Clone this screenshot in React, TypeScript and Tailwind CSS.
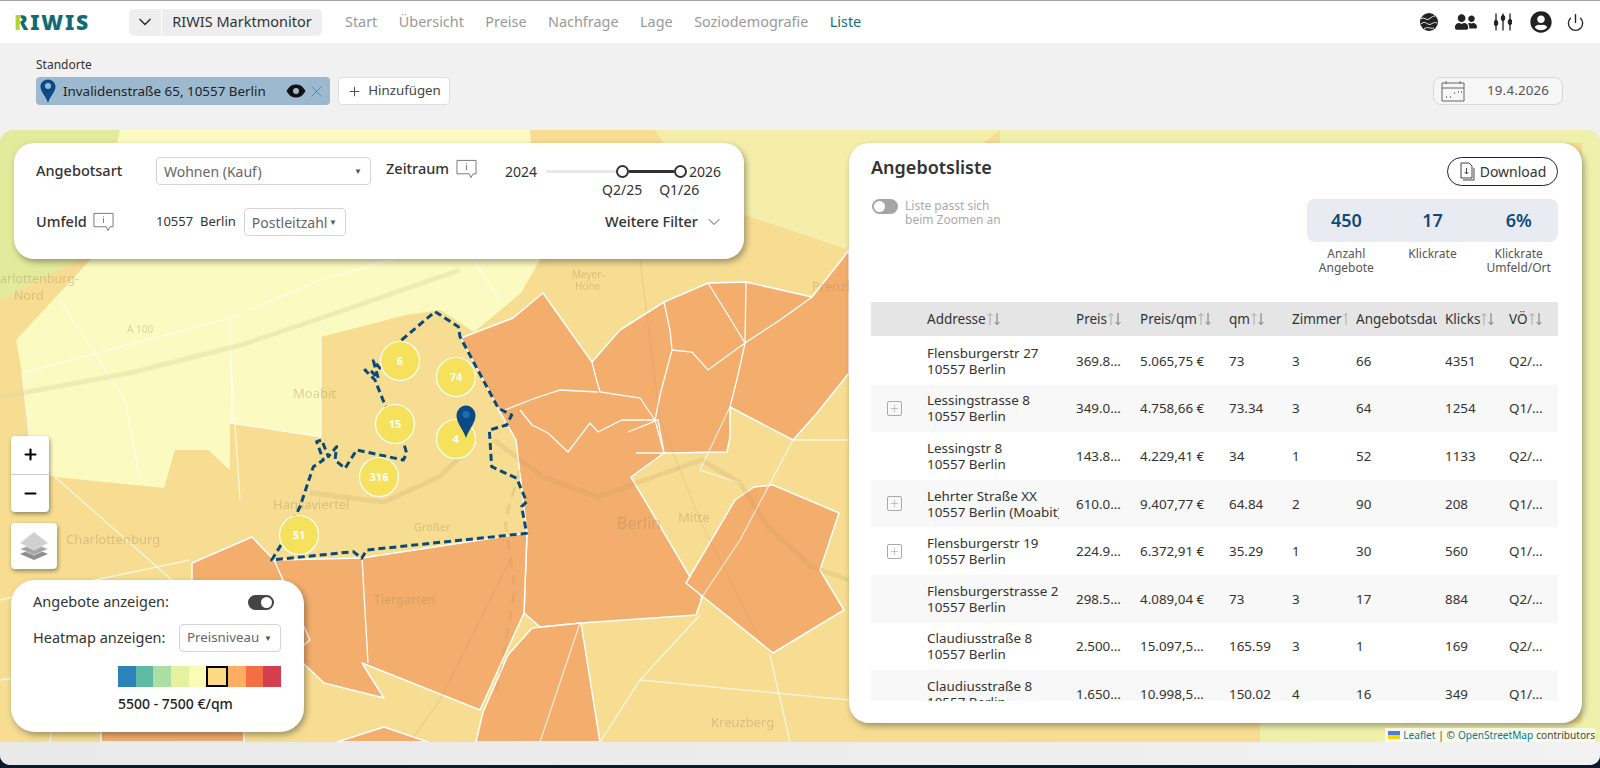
import { ChevronDown, Plus, X, Minus, Power } from "lucide-react";
import { FaUserCircle, FaUserFriends } from "react-icons/fa";

const nav = ["Start", "Übersicht", "Preise", "Nachfrage", "Lage", "Soziodemografie"];

const rows = [
  { a: "Flensburgerstr 27", b: "10557 Berlin", preis: "369.8…", qmPreis: "5.065,75 €", qm: "73", zi: "3", dauer: "66", klicks: "4351", vo: "Q2/…", plus: false },
  { a: "Lessingstrasse 8", b: "10557 Berlin", preis: "349.0…", qmPreis: "4.758,66 €", qm: "73.34", zi: "3", dauer: "64", klicks: "1254", vo: "Q1/…", plus: true },
  { a: "Lessingstr 8", b: "10557 Berlin", preis: "143.8…", qmPreis: "4.229,41 €", qm: "34", zi: "1", dauer: "52", klicks: "1133", vo: "Q2/…", plus: false },
  { a: "Lehrter Straße XX", b: "10557 Berlin (Moabit)", preis: "610.0…", qmPreis: "9.407,77 €", qm: "64.84", zi: "2", dauer: "90", klicks: "208", vo: "Q1/…", plus: true },
  { a: "Flensburgerstr 19", b: "10557 Berlin", preis: "224.9…", qmPreis: "6.372,91 €", qm: "35.29", zi: "1", dauer: "30", klicks: "560", vo: "Q1/…", plus: true },
  { a: "Flensburgerstrasse 2", b: "10557 Berlin", preis: "298.5…", qmPreis: "4.089,04 €", qm: "73", zi: "3", dauer: "17", klicks: "884", vo: "Q2/…", plus: false },
  { a: "Claudiusstraße 8", b: "10557 Berlin", preis: "2.500…", qmPreis: "15.097,5…", qm: "165.59", zi: "3", dauer: "1", klicks: "169", vo: "Q2/…", plus: false },
  { a: "Claudiusstraße 8", b: "10557 Berlin", preis: "1.650…", qmPreis: "10.998,5…", qm: "150.02", zi: "4", dauer: "16", klicks: "349", vo: "Q1/…", plus: false },
];

const cols = "grid grid-cols-[56px_149px_64px_89px_63px_64px_89px_64px_49px]";

const legend = ["bg-[#2b83ba]", "bg-[#5fbaa3]", "bg-[#abdda4]", "bg-[#e3f1a0]", "bg-[#fbfbb8]", "bg-[#fdd981]", "bg-[#fdae61]", "bg-[#f46d43]", "bg-[#d53e4f]"];

const orange = [
  "461,338 513,318 543,293 592,362 620,330 664,302 708,283 746,282 812,297 839,263 849,250 849,373 817,413 793,440 730,407 730,437 727,452 664,453 631,477 686,570 702,598 696,615 581,623 540,627 524,613 527,533 516,440 500,412",
  "362,558 527,533 524,613 480,710 362,663 384,698 324,683 300,660 300,640 274,560",
  "483,712 508,655 532,628 581,623 600,742 476,742",
  "754,487 773,485 839,513 820,570 844,610 773,653 686,583 735,500",
  "192,563 252,537 274,560 310,640 250,690 192,650",
  "101,720 244,720 244,742 101,742",
  "337,742 384,727 428,742",
];

const innerLines = [
  "592,362 596,378 600,392 640,398 655,420 664,453",
  "664,302 670,330 672,350 660,395 655,420",
  "708,283 728,315 745,343 738,375 730,407",
  "672,350 692,352 708,370 745,343 746,282",
  "520,410 532,425 548,433 568,452 590,423 598,432 622,420 655,420",
  "628,432 658,420 664,453 636,453",
  "362,558 368,663",
  "745,343 780,320 812,297",
  "500,412 530,400 560,390 598,392",
];

const lightLines = [
  "22,373 230,318 321,280 460,240",
  "230,350 240,500",
  "125,400 140,480",
  "321,337 321,437",
  "230,318 232,423",
  "230,423 321,437",
  "460,240 500,300",
  "60,300 125,400",
  "22,373 33,470",
  "55,477 240,640 300,690",
  "0,600 190,560",
  "0,680 60,670 50,742",
  "580,623 540,742",
  "600,742 640,680 700,615",
  "640,680 849,700",
  "770,655 790,742",
  "850,440 793,440 740,540 700,600",
  "730,407 700,470 740,483",
];

const boundary = [[455,150],[555,65],[625,110],[630,140],[745,355],[785,375],[770,405],[718,420],[725,530],[800,565],[830,635],[815,650],[830,730],[350,780],[335,805],[310,785],[65,810],[90,770],[150,650],[190,530],[220,510],[200,455],[215,450],[235,500],[260,470],[255,510],[285,535],[320,480],[460,510],[470,490],[460,455],[405,345],[375,270],[345,240],[365,245],[385,265],[370,212],[395,240],[455,150]]
  .map(([x, y]) => `${250 + x / 3},${290 + y / 3}`)
  .join(" ");

const clusters = [
  { x: 400, y: 361, n: "6" },
  { x: 456, y: 377, n: "74" },
  { x: 395, y: 424, n: "15" },
  { x: 456, y: 439, n: "4" },
  { x: 379, y: 477, n: "316" },
  { x: 299, y: 535, n: "51" },
];

const labels = [
  { x: 0, y: 283, t: "arlottenburg-", s: 12.5 },
  { x: 14, y: 300, t: "Nord", s: 12.5 },
  { x: 293, y: 398, t: "Moabit", s: 13 },
  { x: 273, y: 509, t: "Hansaviertel", s: 13 },
  { x: 66, y: 544, t: "Charlottenburg", s: 13 },
  { x: 374, y: 604, t: "Tiergarten", s: 12.5 },
  { x: 617, y: 529, t: "Berlin", s: 16 },
  { x: 678, y: 522, t: "Mitte", s: 13 },
  { x: 711, y: 727, t: "Kreuzberg", s: 13 },
  { x: 414, y: 531, t: "Großer", s: 11 },
  { x: 812, y: 291, t: "Prenzl", s: 13 },
  { x: 127, y: 333, t: "A 100", s: 10 },
  { x: 572, y: 278, t: "Meyer-", s: 10 },
  { x: 575, y: 290, t: "Höhe", s: 10 },
];

function MapBackdrop() {
  return (
    <svg className="absolute inset-0 h-full w-full" viewBox="0 130 1600 612" preserveAspectRatio="none">
      <rect x="0" y="130" width="1600" height="612" fill="#f6dd92" />
      <polygon points="0,130 120,130 80,260 0,300" fill="#e2ea9c" />
      <polygon points="120,130 530,130 540,260 521,293 474,332 440,310 406,315 321,337 321,437 230,423 230,470 208,450 175,450 164,488 55,477 33,470 22,373 16,340 90,260" fill="#fbfac0" />
      <polygon points="655,130 1000,130 849,250 700,200" fill="#f4eeaa" />
      <polygon points="1000,130 1600,130 1600,742 1260,742 1260,723 1582,723 1582,143 1000,143" fill="#eef0ac" />
      {orange.map((p, i) => (
        <polygon key={i} points={p} fill="#f3ae6e" stroke="#fff" strokeWidth="1.5" strokeLinejoin="round" />
      ))}
      {lightLines.map((p, i) => (
        <polyline key={i} points={p} fill="none" stroke="#fff" strokeWidth="1.3" opacity="0.7" />
      ))}
      {innerLines.map((p, i) => (
        <polyline key={i} points={p} fill="none" stroke="#fff" strokeWidth="1.3" />
      ))}
      <polyline points="0,397 130,373 241,345 330,315 460,270" fill="none" stroke="#d9d9a0" strokeWidth="5" opacity="0.4" />
      <polyline points="310,493 384,502 439,477 470,448" fill="none" stroke="#b99a58" strokeWidth="5" opacity="0.18" />
      <polyline points="494,440 543,477 598,497 636,483 702,460 740,483 768,527 812,567 849,580" fill="none" stroke="#b98a58" strokeWidth="5" opacity="0.16" />
      <polyline points="510,560 470,640 440,700 410,742" fill="none" stroke="#b9804e" strokeWidth="1" opacity="0.25" />
      <polyline points="640,260 660,420 700,520 760,640" fill="none" stroke="#b9804e" strokeWidth="1" opacity="0.18" />
      <polyline points="520,470 505,520 515,590 495,700" fill="none" stroke="#c08858" strokeWidth="3" strokeDasharray="10 8" opacity="0.2" />
      {labels.map((l) => (
        <text key={l.t} x={l.x} y={l.y} fontSize={l.s} fill="#9b8350" opacity="0.32" fontFamily="'Noto Sans', sans-serif">
          {l.t}
        </text>
      ))}
      <polyline points={boundary} fill="none" stroke="#0b4a78" strokeWidth="3" strokeDasharray="7 4" strokeLinejoin="round" />
      {clusters.map((c) => (
        <g key={c.n}>
          <circle cx={c.x} cy={c.y} r="19.5" fill="#f6e15c" stroke="#fff" strokeWidth="1.2" />
          <text x={c.x} y={c.y + 4} textAnchor="middle" fontSize="11" fontWeight="700" fill="#fff" fontFamily="'Noto Sans', sans-serif">
            {c.n}
          </text>
        </g>
      ))}
      <path d="M466 438 C463 429 456.5 423 456.5 415.5 C456.5 410 461 405.5 466 405.5 C471 405.5 475.5 410 475.5 415.5 C475.5 423 469 429 466 438 Z" fill="#0a4a86" />
      <circle cx="466" cy="414.5" r="3.6" fill="#1d6fb0" />
    </svg>
  );
}

function InfoBubble() {
  return (
    <svg width="21" height="20" viewBox="0 0 22 20" fill="none" stroke="#777" strokeWidth="1">
      <path d="M1 1 H21 V15 H18 L15.5 19 L14 15 H1 Z" strokeLinejoin="round" />
      <path d="M11 6 V11 M11 3.8 V4.6" />
    </svg>
  );
}

function SelectBox({ label, className }: { label: string; className: string }) {
  return (
    <div className={`flex h-[28px] items-center justify-between rounded-[4px] border border-[#d4d4d4] bg-white pl-[7px] pr-[8px] text-[14px] text-[#666] ${className}`}>
      <span>{label}</span>
      <span className="mb-[1px] text-[8px] text-[#555]">▼</span>
    </div>
  );
}

function Toggle({ on }: { on: boolean }) {
  return (
    <div className={`flex h-[15px] w-[26px] rounded-full border-2 ${on ? "justify-end border-[#444] bg-[#444]" : "justify-start border-[#a5a5a5] bg-[#a5a5a5]"}`}>
      <div className="h-[11px] w-[11px] rounded-full bg-white" />
    </div>
  );
}

function SortHead({ label, className = "" }: { label: string; className?: string }) {
  return (
    <div className={`flex items-center overflow-hidden whitespace-nowrap ${className}`}>
      <span className="shrink-0">{label}</span>
      <svg className="shrink-0" width="15" height="14" viewBox="0 0 15 14" fill="none" strokeWidth="1">
        <path d="M4 13 V1.5 M1.5 4 L4 1.5 L6.5 4" stroke="#aaa" />
        <path d="M11 1 V12.5 M8.5 10 L11 12.5 L13.5 10" stroke="#777" />
      </svg>
    </div>
  );
}

function GlobeIcon() {
  return (
    <svg width="18" height="18" viewBox="0 0 18 18">
      <circle cx="9" cy="9" r="9" fill="#222" />
      <path d="M1 6 C4 3 6 8 9 6 C12 4 13 3 15 3 M1 11 C4 8 6 10 8 11 C11 13 13 8 17 10 M4 16 C7 13 10 16 14 15" fill="none" stroke="#fff" strokeWidth="0.9" />
    </svg>
  );
}

function SlidersIcon() {
  return (
    <svg width="18" height="18" viewBox="0 0 18 18" fill="#222" stroke="#222">
      <path d="M2 0.5 V17.5 M9 0.5 V17.5 M16 0.5 V17.5" strokeWidth="1.3" />
      <ellipse cx="2" cy="10" rx="1.8" ry="2.8" />
      <ellipse cx="9" cy="5" rx="1.8" ry="2.8" />
      <ellipse cx="16" cy="9" rx="1.8" ry="2.8" />
    </svg>
  );
}

function LayersIcon() {
  return (
    <svg width="30" height="30" viewBox="0 0 30 30">
      <path d="M15 17 L29 23 L15 29 L1 23 Z" fill="#8f8f8f" />
      <path d="M15 12 L29 18 L15 24 L1 18 Z" fill="#a6a6a6" stroke="#f2f2f2" strokeWidth="0.6" />
      <path d="M15 1 L29 12 L15 19 L1 12 Z" fill="#cfcfcf" stroke="#f2f2f2" strokeWidth="0.6" />
    </svg>
  );
}

export default function App() {
  return (
    <div className="h-[768px] w-full overflow-hidden bg-[#0b1a2e] font-['Noto_Sans',sans-serif]">
      <div className="h-[765px] overflow-hidden rounded-b-[10px] bg-[#f1f1f1]">
        <header className="flex h-[43px] items-center border-t border-[#a3a3a3] bg-white pr-[15px]">
          <div className="ml-[14px] w-[115px] text-[21px] font-black leading-none tracking-[1.9px] text-[#0f6b74]">
            <span className="bg-[linear-gradient(90deg,#b5d334_42%,#0f6b74_42%)] bg-clip-text text-transparent">R</span>IWIS
          </div>
          <div className="flex h-[27px] items-center gap-[1px] text-[14.5px] text-[#333]">
            <div className="flex h-full w-[32px] items-center justify-center rounded-l-[5px] bg-[#eeeeee]">
              <ChevronDown size={20} strokeWidth={2} className="text-[#333]" />
            </div>
            <div className="flex h-full w-[160px] items-center justify-center rounded-r-[5px] bg-[#eeeeee]">RIWIS Marktmonitor</div>
          </div>
          <nav className="ml-[23px] flex gap-[21.5px] text-[14.4px] text-[#999]">
            {nav.map((n) => (
              <span key={n}>{n}</span>
            ))}
            <span className="text-[#136f78]">Liste</span>
          </nav>
          <div className="ml-auto flex items-center text-[#222]">
            <GlobeIcon />
            <FaUserFriends size={22} className="ml-[17px]" />
            <div className="ml-[17px]">
              <SlidersIcon />
            </div>
            <FaUserCircle size={22} className="ml-[18px]" />
            <Power size={19} strokeWidth={1.7} className="ml-[14px]" />
          </div>
        </header>

        <section className="flex h-[87px] items-end justify-between pb-[25px] pl-[36px] pr-[37px]">
          <div>
            <div className="mb-[3px] text-[12px] text-[#333]">Standorte</div>
            <div className="flex gap-[8px]">
              <div className="flex h-[28px] w-[294px] items-center rounded-[4px] bg-[#9db9d0] pl-[4px] pr-[4px] text-[13.4px] text-[#222]">
                <svg width="16" height="24" viewBox="0 0 16 24" className="shrink-0">
                  <path d="M8 24 C6 17 0.5 13 0.5 7.5 C0.5 3.5 4 0.5 8 0.5 C12 0.5 15.5 3.5 15.5 7.5 C15.5 13 10 17 8 24 Z" fill="#0a4a86" />
                  <circle cx="8" cy="7" r="3" fill="#9db9d0" />
                </svg>
                <span className="ml-[7px]">Invalidenstraße 65, 10557 Berlin</span>
                <svg width="20" height="14" viewBox="0 0 20 14" className="ml-auto shrink-0">
                  <path d="M0.5 7 C4 1 7 0.5 10 0.5 C13 0.5 16 1 19.5 7 C16 13 13 13.5 10 13.5 C7 13.5 4 13 0.5 7 Z" fill="#111" />
                  <circle cx="10" cy="7" r="3" fill="#9db9d0" />
                </svg>
                <X size={19} strokeWidth={0.9} className="ml-[1px] shrink-0 text-[#667]" />
              </div>
              <div className="flex h-[28px] w-[112px] items-center justify-center gap-[6px] rounded-[4px] border border-[#ddd] bg-white text-[13.3px] text-[#444]">
                <Plus size={15} strokeWidth={1.5} />
                Hinzufügen
              </div>
            </div>
          </div>
          <div className="flex h-[28px] w-[130px] items-center rounded-[8px] border border-[#d8d8d8] bg-[#f6f6f6] pl-[7px] text-[13.3px] tracking-[0.2px] text-[#555]">
            <svg width="24" height="22" viewBox="0 0 24 22" fill="none" stroke="#666" strokeWidth="1">
              <path d="M1 3 H23 V21 H1 Z M1 8 H23 M5 1 V4 M19 1 V4" />
              <path d="M5 17 H6 M9 17 H10 M13 13 H14 M17 12 H18 M20 12 H21" strokeWidth="1.3" />
            </svg>
            <span className="ml-[22px]">19.4.2026</span>
          </div>
        </section>

        <main className="relative h-[612px] overflow-hidden rounded-t-[14px]">
          <MapBackdrop />

          <div className="absolute left-[14px] top-[13px] h-[116px] w-[730px] rounded-[20px] bg-white pl-[22px] pr-[23px] pt-[14px] text-[#333] shadow-[2px_3px_6px_rgba(0,0,0,0.35)]">
            <div className="flex h-[51px] items-start">
              <div className="flex h-[28px] w-[120px] items-center text-[14.5px] font-medium">Angebotsart</div>
              <SelectBox label="Wohnen (Kauf)" className="w-[215px]" />
              <div className="ml-[15px] flex h-[22px] w-[119px] items-center gap-[7px] pt-[2px] text-[14.5px] font-medium">
                Zeitraum
                <InfoBubble />
              </div>
              <div className="flex w-[216px] flex-col">
                <div className="flex h-[28px] items-center text-[14px]">
                  <span>2024</span>
                  <div className="ml-[9px] h-[3px] flex-1 bg-[#e8e8e8]" />
                  <div className="h-[13px] w-[13px] rounded-full border-2 border-[#333] bg-white" />
                  <div className="h-[3px] w-[45px] bg-[#333]" />
                  <div className="h-[13px] w-[13px] rounded-full border-2 border-[#333] bg-white" />
                  <span className="ml-[2px]">2026</span>
                </div>
                <div className="-mt-[3px] ml-[97px] flex gap-[17px] text-[14px] leading-[16px]">
                  <span>Q2/25</span>
                  <span>Q1/26</span>
                </div>
              </div>
            </div>
            <div className="flex h-[28px] items-center">
              <div className="flex w-[120px] items-center gap-[6px] text-[14.5px] font-medium">
                Umfeld
                <InfoBubble />
              </div>
              <span className="text-[13px]">10557&nbsp; Berlin</span>
              <SelectBox label="Postleitzahl" className="ml-[8px] w-[102px]" />
              <div className="ml-auto flex items-center gap-[6px] text-[14.5px] font-medium">
                Weitere Filter
                <ChevronDown size={20} strokeWidth={1} className="-mr-[3px]" />
              </div>
            </div>
          </div>

          <div className="absolute left-[11px] top-[306px] flex h-[76px] w-[38px] flex-col rounded-[4px] bg-white text-black shadow-[1px_2px_4px_rgba(0,0,0,0.4)]">
            <div className="flex flex-1 items-center justify-center border-b border-[#ccc]">
              <Plus size={17} strokeWidth={3} />
            </div>
            <div className="flex flex-1 items-center justify-center">
              <Minus size={17} strokeWidth={3} />
            </div>
          </div>

          <div className="absolute left-[11px] top-[393px] flex h-[46px] w-[46px] items-center justify-center rounded-[4px] bg-white shadow-[1px_2px_4px_rgba(0,0,0,0.4)]">
            <LayersIcon />
          </div>

          <div className="absolute left-[11px] top-[450px] h-[152px] w-[293px] rounded-[24px] bg-white pl-[22px] pr-[23px] pt-[14px] text-[#333] shadow-[2px_3px_6px_rgba(0,0,0,0.35)]">
            <div className="flex h-[16px] items-center justify-between pr-[7px] text-[14.5px]">
              Angebote anzeigen:
              <Toggle on />
            </div>
            <div className="mt-[14px] flex items-center justify-between text-[14.5px]">
              Heatmap anzeigen:
              <SelectBox label="Preisniveau" className="w-[102px] !text-[13.3px]" />
            </div>
            <div className="ml-[85px] mt-[14px] flex h-[21px] w-[163px]">
              {legend.map((c, i) => (
                <div key={c} className={`flex-1 ${c} ${i === 5 ? "border-2 border-black" : ""}`} />
              ))}
            </div>
            <div className="ml-[85px] mt-[6px] text-[14px] font-medium text-[#222]">5500 - 7500 €/qm</div>
          </div>

          <aside className="absolute left-[849px] top-[13px] h-[580px] w-[733px] rounded-[20px] bg-white pl-[22px] pr-[24px] pt-[14px] text-[#333] shadow-[2px_3px_6px_rgba(0,0,0,0.35)]">
            <div className="flex h-[29px] items-start justify-between">
              <h2 className="text-[18px] font-semibold leading-[20px] text-[#333]">Angebotsliste</h2>
              <div className="flex h-[29px] w-[111px] items-center justify-center gap-[5px] rounded-full border border-[#222] text-[14px]">
                <svg width="16" height="19" viewBox="0 0 16 19" fill="none" stroke="#444" strokeWidth="1">
                  <path d="M2 1 H10 L13 4 V16 H2 Z M4 18 H15 V6" />
                  <path d="M7.5 6 V12 M5.5 10 L7.5 12 L9.5 10" />
                </svg>
                Download
              </div>
            </div>
            <div className="mt-[13px] flex items-start justify-between">
              <div className="ml-[1px] flex gap-[7px] text-[12px] leading-[14px] text-[#aaa]">
                <Toggle on={false} />
                <div>
                  Liste passt sich
                  <br />
                  beim Zoomen an
                </div>
              </div>
              <div className="w-[251px]">
                <div className="grid h-[43px] grid-cols-3 items-center rounded-[8px] bg-[#e8ecf2] text-center text-[18px] font-semibold text-[#0e4a7a]">
                  <span className="-ml-[5px]">450</span>
                  <span>17</span>
                  <span className="ml-[5px]">6%</span>
                </div>
                <div className="mt-[5px] grid grid-cols-3 text-center text-[12px] leading-[14px] text-[#555]">
                  <span className="-ml-[5px]">
                    Anzahl
                    <br />
                    Angebote
                  </span>
                  <span>Klickrate</span>
                  <span className="ml-[5px]">
                    Klickrate
                    <br />
                    Umfeld/Ort
                  </span>
                </div>
              </div>
            </div>

            <div className={`${cols} mt-[27px] h-[34px] items-center bg-[#e5e5e5] text-[13.5px] text-[#333]`}>
              <span />
              <SortHead label="Addresse" />
              <SortHead label="Preis" />
              <SortHead label="Preis/qm" />
              <SortHead label="qm" />
              <SortHead label="Zimmer" className="w-[55px]" />
              <div className="w-[81px] overflow-hidden whitespace-nowrap">Angebotsdauer</div>
              <SortHead label="Klicks" />
              <SortHead label="VÖ" />
            </div>
            <div className="h-[365px] overflow-hidden pt-[1px]">
              {rows.map((r, i) => (
                <div key={i} className={`${cols} h-[47.6px] items-center text-[13.4px] leading-[16px] text-[#333] ${i % 2 === 1 ? "bg-[#f8f8f8]" : "bg-white"}`}>
                  <div className="pl-[16px]">
                    {r.plus && (
                      <div className="flex h-[15px] w-[15px] items-center justify-center rounded-[2px] border border-[#aaa] text-[#888]">
                        <Plus size={11} strokeWidth={1} />
                      </div>
                    )}
                  </div>
                  <div className="w-[132px] overflow-hidden whitespace-nowrap">
                    <div>{r.a}</div>
                    <div>{r.b}</div>
                  </div>
                  <span>{r.preis}</span>
                  <span>{r.qmPreis}</span>
                  <span>{r.qm}</span>
                  <span>{r.zi}</span>
                  <span>{r.dauer}</span>
                  <span>{r.klicks}</span>
                  <span>{r.vo}</span>
                </div>
              ))}
            </div>
          </aside>

          <div className="absolute bottom-[0px] right-[5px] flex h-[14px] items-center gap-[3px] bg-white/70 pl-[3px] text-[10.1px] leading-none text-[#444]">
            <svg width="12" height="8" viewBox="0 0 12 8">
              <rect width="12" height="4" fill="#4c7be1" />
              <rect y="4" width="12" height="4" fill="#ffd500" />
            </svg>
            <span className="text-[#0078a8]">Leaflet</span> | © <span className="text-[#0078a8]">OpenStreetMap</span> contributors
          </div>
        </main>
        <div className="h-[23px] bg-gradient-to-r from-[#e9e9e9] via-[#ececec] to-[#f2f2f2]" />
      </div>
    </div>
  );
}
